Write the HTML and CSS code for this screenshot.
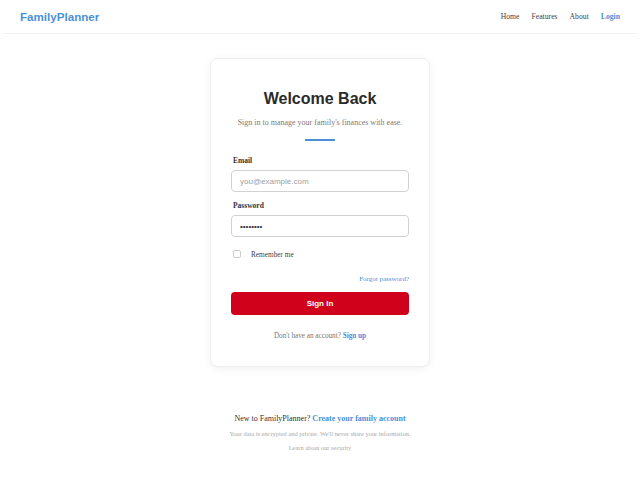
FILE: index.html
```html
<!DOCTYPE html>
<html lang="en">
<head>
<meta charset="utf-8">
<title>FamilyPlanner – Sign In</title>
<link rel="stylesheet" href="styles.css">
</head>
<body>
  <header class="topbar">
    <a class="brand" href="#">FamilyPlanner</a>
    <nav class="nav">
      <a href="#">Home</a>
      <a href="#">Features</a>
      <a href="#">About</a>
      <a href="#" class="nav-active">Login</a>
    </nav>
  </header>

  <main class="page">
    <section class="card">
      <h1 class="card-title">Welcome Back</h1>
      <p class="card-sub">Sign in to manage your family's finances with ease.</p>
      <div class="accent"></div>

      <form class="form">
        <label class="field-label" for="email">Email</label>
        <input class="field" id="email" type="email" placeholder="you@example.com">

        <label class="field-label field-label-gap" for="password">Password</label>
        <input class="field" id="password" type="password" value="password">

        <label class="remember">
          <span class="box"></span>
          <span>Remember me</span>
        </label>

        <div class="forgot"><a href="#">Forgot password?</a></div>

        <button class="btn" type="button">Sign In</button>
      </form>

      <p class="signup">Don't have an account? <a href="#">Sign up</a></p>
    </section>

    <footer class="foot">
      <p class="foot-main">New to FamilyPlanner? <a href="#">Create your family account</a></p>
      <p class="foot-note">Your data is encrypted and private. We'll never share your information.</p>
      <p class="foot-note foot-link">Learn about our security</p>
    </footer>
  </main>
</body>
</html>
```

FILE: styles.css
```css
* { box-sizing: border-box; }

body {
  margin: 0;
  background: #fff;
  font-family: "Liberation Serif", "Times New Roman", serif;
  color: #333;
}

a { text-decoration: none; }

.topbar {
  height: 34px;
  margin: 0 4px;
  padding: 0 16px;
  display: flex;
  align-items: center;
  justify-content: space-between;
  border-bottom: 1px solid #f0f0f0;
}

.brand {
  font-family: "Liberation Sans", Arial, sans-serif;
  font-weight: 700;
  font-size: 11.6px;
  color: #4a90d9;
}

.nav {
  display: flex;
  gap: 12px;
}

.nav a {
  font-size: 7.7px;
  color: #444;
}

.nav a.nav-active {
  color: #4a90d9;
  font-weight: 700;
}

.page {
  display: flex;
  flex-direction: column;
  align-items: center;
  padding-top: 24px;
}

.card {
  width: 220px;
  background: #fff;
  border: 1px solid #eee;
  border-radius: 8px;
  box-shadow: 0 2px 10px rgba(0, 0, 0, 0.06);
  padding: 30px 20px 24px;
  display: flex;
  flex-direction: column;
  align-items: center;
}

.card-title {
  margin: 0;
  font-family: "Liberation Sans", Arial, sans-serif;
  font-size: 16px;
  font-weight: 700;
  line-height: 20px;
  color: #2b2b2b;
}

.card-sub {
  margin: 8px 0 0;
  font-size: 8px;
  line-height: 12px;
  color: #7a7a7a;
}

.accent {
  width: 30px;
  height: 2px;
  margin-top: 10px;
  background: #4a90d9;
}

.form {
  width: 100%;
  display: flex;
  flex-direction: column;
  margin-top: 14px;
}

.field-label {
  font-size: 7.5px;
  font-weight: 700;
  line-height: 12px;
  padding-left: 2px;
  color: #333;
}

.field-label-gap { margin-top: 8px; }

.field {
  margin-top: 3px;
  height: 22px;
  width: 100%;
  border: 1px solid #d2d2d2;
  border-radius: 4px;
  padding: 0 8px;
  font-family: "Liberation Sans", Arial, sans-serif;
  font-size: 8px;
  color: #333;
  background: #fff;
}

.field::placeholder { color: #a0a0a0; }

.remember {
  margin-top: 11px;
  height: 12px;
  display: flex;
  align-items: center;
  gap: 10px;
  padding-left: 2px;
  font-size: 7.3px;
  color: #444;
}

.box {
  width: 8px;
  height: 8px;
  border: 1px solid #ccc;
  border-radius: 2px;
  background: #fff;
}

.forgot {
  margin-top: 10px;
  text-align: right;
  line-height: 12px;
}

.forgot a {
  font-size: 7px;
  color: #4a90d9;
}

.btn {
  margin-top: 7px;
  height: 23px;
  width: 100%;
  border: none;
  border-radius: 4px;
  background: #d0021b;
  color: #fff;
  font-family: "Liberation Sans", Arial, sans-serif;
  font-size: 8px;
  font-weight: 700;
}

.signup {
  margin: 15px 0 0;
  font-size: 7.2px;
  line-height: 12px;
  color: #777;
}

.signup a {
  color: #4a90d9;
  font-weight: 700;
}

.foot {
  margin-top: 46px;
  text-align: center;
}

.foot p { margin: 0; }

.foot-main {
  font-size: 8px;
  line-height: 12px;
  color: #333;
}

.foot-main a {
  color: #4a90d9;
  font-weight: 700;
}

.foot-note {
  margin-top: 4px !important;
  font-size: 6.4px;
  line-height: 10px;
  color: #aaa;
}

.foot-link { margin-top: 4px !important; }
```
